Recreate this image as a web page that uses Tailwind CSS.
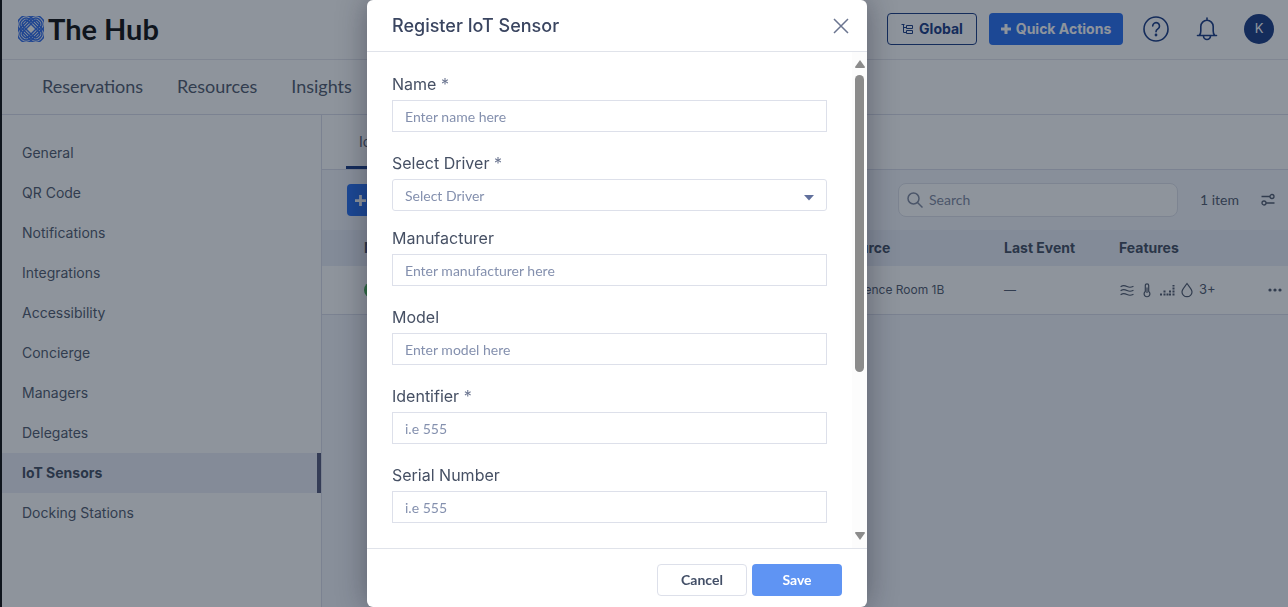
<!DOCTYPE html>
<html lang="en">
<head>
    <meta charset="UTF-8">
    <meta name="viewport" content="width=device-width, initial-scale=1.0">
    <title>The Hub - IoT Sensors</title>
    <script src="https://cdn.jsdelivr.net/npm/@tailwindcss/browser@4"></script>
</head>
<body class="h-screen overflow-hidden font-['Inter',sans-serif] text-sm text-[#465064] bg-white">
    <div class="flex h-screen flex-col border-l-2 border-black">
        <!-- Header -->
        <header class="flex h-[60px] shrink-0 items-center justify-between border-b border-[#e2e3ea] pr-[14px] pb-[2px] pl-4">
            <a href="#" class="flex items-center gap-1 text-black">
                <svg class="size-[26px]" viewBox="0 0 26 26" fill="none" stroke="#2463e8" stroke-width="1.5">
                    <g transform="rotate(45 13 13)">
                        <rect x="-2" y="4.800" width="30" height="16.400" rx="7" />
                        <rect x="0.300" y="7.100" width="25.400" height="11.800" rx="5" />
                        <rect x="2.600" y="9.400" width="20.800" height="7.200" rx="3" />
                    </g>
                    <g transform="rotate(-45 13 13)">
                        <rect x="-2" y="4.800" width="30" height="16.400" rx="7" />
                        <rect x="0.300" y="7.100" width="25.400" height="11.800" rx="5" />
                        <rect x="2.600" y="9.400" width="20.800" height="7.200" rx="3" />
                    </g>
                </svg>
                <span class="font-['Lato',sans-serif] text-[29px] leading-9 font-bold">The Hub</span>
            </a>
            <div class="flex items-center">
                <button class="flex h-8 w-[90px] items-center justify-center gap-[6px] rounded border border-[#0b2e7c] font-bold text-[#0b2e7c]">
                    <svg class="size-3" viewBox="0 0 12 12" fill="none" stroke="currentColor"><path d="M.5 1.5h3M2.5 1.5v8h3M2.5 4.5h3M5.5 2.5h6v3h-6zM5.5 7.5h6v3h-6z" /></svg>
                    Global
                </button>
                <button class="ml-3 flex h-8 w-[134px] items-center justify-center gap-[5px] rounded bg-[#1a66f0] font-bold text-white">
                    <svg class="size-[10px]" viewBox="0 0 10 10" fill="none" stroke="currentColor" stroke-width="3"><path d="M5 0v10M0 5h10" /></svg>
                    Quick Actions
                </button>
                <button class="ml-5 text-[#0b2e7c]" aria-label="Help">
                    <svg class="size-[26px]" viewBox="0 0 26 26" fill="none" stroke="currentColor" stroke-width="1.6" stroke-linecap="round"><circle cx="13" cy="13" r="12" /><path d="M9.7 10a3.4 3.4 0 1 1 5.2 2.9c-1.2.8-1.9 1.3-1.9 2.8" /><circle cx="13" cy="19" r=".6" fill="currentColor" /></svg>
                </button>
                <button class="ml-[26px] text-[#0b2e7c]" aria-label="Notifications">
                    <svg class="size-6" viewBox="0 0 24 24" fill="none" stroke="currentColor" stroke-width="1.6" stroke-linecap="round" stroke-linejoin="round"><path d="M12 1v1.500M2.500 18.500h19M4.500 18c1-1 1.300-2 1.300-4V9.500a6.200 6.200 0 0 1 12.400 0V14c0 2 .3 3 1.300 4M8.500 19a3.500 3.500 0 0 0 7 0" /></svg>
                </button>
                <button class="ml-[25px] size-[30px] rounded-full bg-[#0b2e7c] text-[13px] text-white">K</button>
            </div>
        </header>

        <!-- Navigation -->
        <nav class="flex h-[55px] shrink-0 items-center gap-[34px] border-b border-[#d8dbe8] px-10 pb-[3px] font-['Lato',sans-serif] text-lg">
            <a href="#">Reservations</a>
            <a href="#">Resources</a>
            <a href="#">Insights</a>
        </nav>

        <div class="flex min-h-0 flex-1">
            <!-- Sidebar -->
            <aside class="w-80 shrink-0 border-r border-[#d8dbe8] pt-[18px] leading-10">
                <a href="#" class="block px-5">General</a>
                <a href="#" class="block px-5">QR Code</a>
                <a href="#" class="block px-5">Notifications</a>
                <a href="#" class="block px-5">Integrations</a>
                <a href="#" class="block px-5">Accessibility</a>
                <a href="#" class="block px-5">Concierge</a>
                <a href="#" class="block px-5">Managers</a>
                <a href="#" class="block px-5">Delegates</a>
                <a href="#" class="block border-r-4 border-[#4a4f72] bg-[#ebedf6] px-5 font-bold text-[#364257]">IoT Sensors</a>
                <a href="#" class="block px-5">Docking Stations</a>
            </aside>

            <!-- Main Content -->
            <main class="min-w-0 flex-1 bg-[#f3f5fb]">
                <div class="flex h-[55px] border-b border-[#d8dbe8] bg-white pl-6">
                    <a href="#" class="border-b-3 border-[#0b2e7c] px-[13px] leading-[54px]">IoT Sensors</a>
                </div>
                <div class="flex h-[60px] items-center pr-[13px] pl-[25px]">
                    <button class="flex h-8 w-[90px] items-center gap-[6px] rounded bg-[#1a66f0] px-2 font-bold text-white">
                        <svg class="size-[11px]" viewBox="0 0 10 10" fill="none" stroke="currentColor" stroke-width="2.5"><path d="M5 0v10M0 5h10" /></svg>
                        Add
                    </button>
                    <label class="ml-auto flex h-[34px] w-[280px] items-center gap-[6px] rounded-lg border border-[#dcdfe8] bg-white px-2">
                        <svg class="size-4 text-[#79829a]" viewBox="0 0 16 16" fill="none" stroke="currentColor" stroke-width="1.5"><circle cx="6.500" cy="6.500" r="5.500" /><path d="m10.500 10.500 5 5" /></svg>
                        <input type="text" placeholder="Search" aria-label="Search" class="min-w-0 flex-1 font-['Lato',sans-serif] text-sm outline-none placeholder:text-[#79829a]">
                    </label>
                    <span class="ml-[22px] font-['Lato',sans-serif] text-sm">1 item</span>
                    <button class="ml-[22px]" aria-label="Filters">
                        <svg class="size-[14px]" viewBox="0 0 14 14" fill="none" stroke="currentColor" stroke-width="1.3"><path d="M.5 3.500h8.500M5 10h8.500" /><circle cx="11" cy="3.500" r="2" /><circle cx="3" cy="10" r="2" /></svg>
                    </button>
                </div>
                <table class="w-full table-fixed text-left">
                    <thead class="bg-[#e8ecf6] text-[#364257]">
                        <tr class="h-9">
                            <th class="pl-[42px] font-bold">Name</th>
                            <th class="w-[178px] font-bold">Resource</th>
                            <th class="w-[115px] font-bold">Last Event</th>
                            <th class="w-[148px] font-bold">Features</th>
                            <th class="w-[21px]"></th>
                        </tr>
                    </thead>
                    <tbody class="bg-white text-xs">
                        <tr class="h-12 border-b border-[#d8dbe8]">
                            <td class="pl-[42px]"><span class="block size-4 rounded-full bg-[#3fae49]"></span></td>
                            <td>Conference Room 1B</td>
                            <td>—</td>
                            <td>
                                <div class="flex items-center gap-[6px]">
                                    <svg class="size-4" viewBox="0 0 16 16" fill="none" stroke="currentColor" stroke-width="1.2" stroke-linecap="round"><path d="M2 4.500c2-1.500 4-1 6 0s4 1 6 0M2 8.500c2-1.500 4-1 6 0s4 1 6 0M2 12.500c2-1.500 4-1 6 0s4 1 6 0" /></svg>
                                    <svg class="h-4 w-3" viewBox="0 0 12 16" fill="none" stroke="currentColor" stroke-width="1.2"><path d="M4.300 9.500V3.500a1.700 1.700 0 0 1 3.400 0v6a2.900 2.900 0 1 1-3.400 0zM6 5.500V11" /></svg>
                                    <svg class="size-4" viewBox="0 0 16 16" fill="none" stroke="currentColor" stroke-width="2" stroke-dasharray="2 1"><path d="M2 13.500v-2M5.500 13.500V8M8.500 13.500v-2M11 13.500V8M14.500 13.500V3" /></svg>
                                    <svg class="h-4 w-3" viewBox="0 0 12 16" fill="none" stroke="currentColor" stroke-width="1.2"><path d="M6 1.500C4 4.500 1 7 1 10a5 4.700 0 0 0 10 0C11 7 8 4.500 6 1.500z" /></svg>
                                    <span class="text-[13px]">3+</span>
                                </div>
                            </td>
                            <td>
                                <button class="block" aria-label="More">
                                    <svg class="h-4 w-4" viewBox="0 0 16 16" fill="currentColor"><circle cx="3" cy="8" r="1.600" /><circle cx="8" cy="8" r="1.600" /><circle cx="13" cy="8" r="1.600" /></svg>
                                </button>
                            </td>
                        </tr>
                    </tbody>
                </table>
            </main>
        </div>
    </div>

    <!-- Register modal -->
    <div class="fixed inset-0 flex justify-center bg-gray-800/50 pr-[54px]">
        <form class="flex h-full w-[500px] flex-col overflow-hidden rounded-md bg-white shadow-[0_0_30px_rgba(20,20,40,0.4)]">
            <div class="flex h-[52px] shrink-0 items-center justify-between border-b border-[#e0e3ea] pr-[18px] pl-[25px]">
                <h2 class="text-lg font-medium text-[#3a4560]">Register IoT Sensor</h2>
                <button type="button" class="text-[#6b7590]" aria-label="Close">
                    <svg class="size-4" viewBox="0 0 16 16" fill="none" stroke="currentColor" stroke-width="1.500"><path d="m1 1 14 14M15 1 1 15" /></svg>
                </button>
            </div>
            <div class="flex min-h-0 flex-1">
                <div class="flex flex-1 flex-col gap-[19px] overflow-hidden pt-5 pr-[25px] pl-[25px]">
                    <div class="flex flex-col gap-1">
                        <label for="name" class="text-base">Name <span class="text-[#6b7590]">*</span></label>
                        <input id="name" type="text" placeholder="Enter name here" class="h-8 border border-[#dde0ea] px-3 pt-px font-['Lato',sans-serif] text-sm placeholder:text-[#8490ae]">
                    </div>
                    <div class="-mb-1 flex flex-col gap-1">
                        <label for="driver" class="text-base">Select Driver <span class="text-[#6b7590]">*</span></label>
                        <div class="relative">
                            <select id="driver" class="block h-8 w-full appearance-none rounded-[3px] border border-[#dde0ea] bg-white px-3 pt-px font-['Lato',sans-serif] text-sm text-[#8490ae]">
                                <option>Select Driver</option>
                            </select>
                            <svg class="pointer-events-none absolute top-4 right-[13px] h-[6px] w-[10px]" viewBox="0 0 10 6" fill="#61709c"><path d="M0 0h10L5 5.500z" /></svg>
                        </div>
                    </div>
                    <div class="flex flex-col gap-1">
                        <label for="manufacturer" class="text-base">Manufacturer</label>
                        <input id="manufacturer" type="text" placeholder="Enter manufacturer here" class="h-8 border border-[#dde0ea] px-3 pt-px font-['Lato',sans-serif] text-sm placeholder:text-[#8490ae]">
                    </div>
                    <div class="flex flex-col gap-1">
                        <label for="model" class="text-base">Model</label>
                        <input id="model" type="text" placeholder="Enter model here" class="h-8 border border-[#dde0ea] px-3 pt-px font-['Lato',sans-serif] text-sm placeholder:text-[#8490ae]">
                    </div>
                    <div class="flex flex-col gap-1">
                        <label for="identifier" class="text-base">Identifier <span class="text-[#6b7590]">*</span></label>
                        <input id="identifier" type="text" placeholder="i.e 555" class="h-8 border border-[#dde0ea] px-3 pt-px font-['Lato',sans-serif] text-sm placeholder:text-[#8490ae]">
                    </div>
                    <div class="flex flex-col gap-1">
                        <label for="serial" class="text-base">Serial Number</label>
                        <input id="serial" type="text" placeholder="i.e 555" class="h-8 border border-[#dde0ea] px-3 pt-px font-['Lato',sans-serif] text-sm placeholder:text-[#8490ae]">
                    </div>
                </div>
                <!-- Scrollbar -->
                <div class="flex w-[15px] flex-col items-center bg-[#fcfcfc] pt-2 pb-2">
                    <svg class="h-2 w-[10px] shrink-0" viewBox="0 0 10 8" fill="#8b8b8b"><path d="M5 0 10 7q0 1-1 1H1Q0 8 0 7z" /></svg>
                    <div class="mt-[7px] flex-1">
                        <div class="h-[65%] w-[9px] rounded-full bg-[#8b8b8b]"></div>
                    </div>
                    <svg class="h-2 w-[10px] shrink-0" viewBox="0 0 10 8" fill="#8b8b8b"><path d="M5 8 10 1q0-1-1-1H1Q0 0 0 1z" /></svg>
                </div>
            </div>
            <div class="flex h-[59px] shrink-0 justify-end gap-[5px] border-t border-[#e0e3ea] pt-[15px] pr-[25px] font-['Lato',sans-serif]">
                <button type="button" class="h-8 w-[90px] rounded border border-[#dde0ea] font-bold text-[#434f67]">Cancel</button>
                <button type="submit" class="h-8 w-[90px] rounded bg-[#5f94f3] font-bold text-white">Save</button>
            </div>
        </form>
    </div>
</body>
</html>
